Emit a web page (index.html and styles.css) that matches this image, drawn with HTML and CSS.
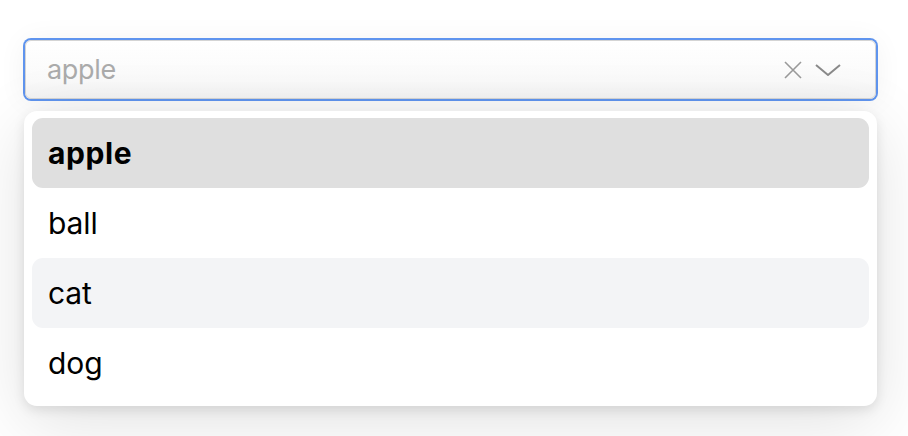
FILE: index.html
```html
<!DOCTYPE html>
<html>
<head>
<meta charset="utf-8">
<link rel="stylesheet" href="styles.css">
</head>
<body>
<div class="page">
  <div class="combo">
    <div class="control">
      <span class="placeholder">apple</span>
      <div class="icons">
        <svg class="clear" width="20" height="20" viewBox="0 0 20 20"><path d="M2 2 L18 18 M18 2 L2 18" stroke="#9a9a9a" stroke-width="1.6" fill="none"/></svg>
        <svg class="chev" width="28" height="16" viewBox="0 0 28 16"><path d="M2 3 L14 13 L26 3" stroke="#8a8a8a" stroke-width="2" fill="none" stroke-linejoin="round"/></svg>
      </div>
    </div>
    <ul class="menu">
      <li class="item selected">apple</li>
      <li class="item">ball</li>
      <li class="item hover">cat</li>
      <li class="item">dog</li>
    </ul>
  </div>
</div>
</body>
</html>
```

FILE: styles.css
```css
html, body {
  margin: 0;
  padding: 0;
  background: #ffffff;
  font-family: Inter, "Noto Sans", "Liberation Sans", sans-serif;
}
.page {
  padding: 40px 32px 30px 25px;
  min-height: 436px;
  box-sizing: border-box;
}
.combo {
  display: flex;
  flex-direction: column;
  gap: 12px;
}
.control {
  height: 57px;
  border: 1px solid #d4d4d4;
  border-radius: 6px;
  box-shadow: 0 0 0 2px #5f94ee, 0 2px 30px rgba(0,0,0,0.06);
  background: linear-gradient(#ffffff, #fafafa 70%, #f3f3f3);
  display: flex;
  align-items: center;
  justify-content: space-between;
  padding: 0 33px 0 21px;
}
.placeholder {
  font-size: 27px;
  color: #ababab;
  letter-spacing: -0.3px;
}
.icons {
  display: flex;
  align-items: center;
  gap: 11px;
}
.clear { display: block; }
.chev { display: block; margin-top: 1px; }
.menu {
  list-style: none;
  margin: 0 0 0 -1px;
  padding: 7px 8px 8px;
  width: 837px;
  background: #ffffff;
  border-radius: 13px;
  box-shadow: 0 4px 12px rgba(0,0,0,0.10), 0 16px 70px rgba(0,0,0,0.12);
}
.item {
  height: 70px;
  line-height: 70px;
  padding-left: 16px;
  font-size: 30px;
  color: #000;
  border-radius: 11px;
  letter-spacing: -0.1px;
}
.item.selected {
  background: #dfdfdf;
  font-weight: 700;
  letter-spacing: 0.6px;
}
.item.hover {
  background: #f3f4f6;
}
```
